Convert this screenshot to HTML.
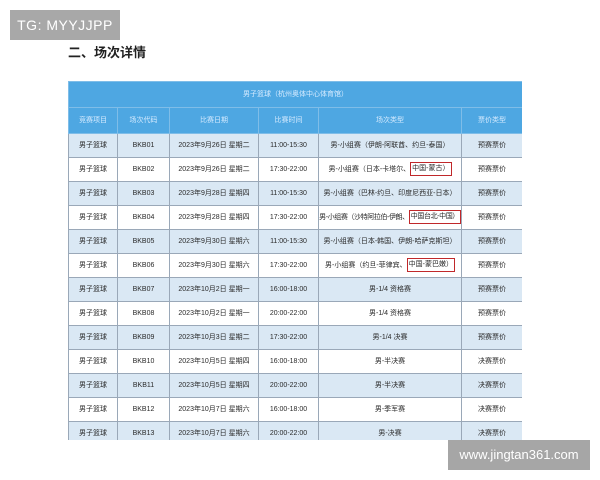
<!DOCTYPE html>
<html><head><meta charset="utf-8"><style>
body{margin:0;width:600px;height:480px;background:#fff;position:relative;overflow:hidden;font-family:"Liberation Sans","Noto Sans CJK SC",sans-serif;}
.tg{position:absolute;left:10px;top:10px;width:110px;height:30px;background:#a8a8a8;color:#fff;font-size:14px;line-height:30px;text-align:center;letter-spacing:0.5px}
.h{position:absolute;left:68px;top:42px;font-size:13px;font-weight:bold;color:#222}
.wrap{position:absolute;left:68px;top:81px;width:454px;height:359px;overflow:hidden}
table{border-collapse:collapse;width:454px;table-layout:fixed}
td{border:1px solid #9aa8b8;text-align:center;vertical-align:middle;font-size:7px;line-height:23px;color:#2a2a2a;height:23px;padding:0;white-space:nowrap;overflow:hidden}
tr.t td{background:#4ea7e2;color:#d6ebff;height:25px;line-height:25px;border-color:#7fbde8}
tr.b td{background:#dae8f4}
.r{display:inline-block;line-height:10px;border:1.5px solid #c0282a;padding:1px 1px;vertical-align:middle}
.tight{letter-spacing:-0.4px}
.wm{position:absolute;left:448px;top:440px;width:142px;height:30px;background:#a6a6a6;color:#fff;font-size:13px;line-height:30px;text-align:center}
</style></head><body>
<div class="tg">TG: MYYJJPP</div>
<div class="h">二、场次详情</div>
<div class="wrap"><table>
<colgroup><col style="width:49px"><col style="width:52px"><col style="width:89px"><col style="width:60px"><col style="width:143px"><col style="width:61px"></colgroup>
<tr class="t"><td colspan="6">男子篮球（杭州奥体中心体育馆）</td></tr>
<tr class="t"><td>竞赛项目</td><td>场次代码</td><td>比赛日期</td><td>比赛时间</td><td>场次类型</td><td>票价类型</td></tr>
<tr class="b"><td>男子篮球</td><td>BKB01</td><td>2023年9月26日 星期二</td><td>11:00-15:30</td><td>男-小组赛（伊朗-阿联酋、约旦-泰国）</td><td>预赛票价</td></tr>
<tr><td>男子篮球</td><td>BKB02</td><td>2023年9月26日 星期二</td><td>17:30-22:00</td><td>男-小组赛（日本-卡塔尔、<span class="r">中国-蒙古）</span></td><td>预赛票价</td></tr>
<tr class="b"><td>男子篮球</td><td>BKB03</td><td>2023年9月28日 星期四</td><td>11:00-15:30</td><td>男-小组赛（巴林-约旦、印度尼西亚-日本）</td><td>预赛票价</td></tr>
<tr><td>男子篮球</td><td>BKB04</td><td>2023年9月28日 星期四</td><td>17:30-22:00</td><td class="tight">男-小组赛（沙特阿拉伯-伊朗、<span class="r">中国台北-中国）</span></td><td>预赛票价</td></tr>
<tr class="b"><td>男子篮球</td><td>BKB05</td><td>2023年9月30日 星期六</td><td>11:00-15:30</td><td>男-小组赛（日本-韩国、伊朗-哈萨克斯坦）</td><td>预赛票价</td></tr>
<tr><td>男子篮球</td><td>BKB06</td><td>2023年9月30日 星期六</td><td>17:30-22:00</td><td>男-小组赛（约旦-菲律宾、<span class="r">中国-蒙巴嫩）</span></td><td>预赛票价</td></tr>
<tr class="b"><td>男子篮球</td><td>BKB07</td><td>2023年10月2日 星期一</td><td>16:00-18:00</td><td>男-1/4 资格赛</td><td>预赛票价</td></tr>
<tr><td>男子篮球</td><td>BKB08</td><td>2023年10月2日 星期一</td><td>20:00-22:00</td><td>男-1/4 资格赛</td><td>预赛票价</td></tr>
<tr class="b"><td>男子篮球</td><td>BKB09</td><td>2023年10月3日 星期二</td><td>17:30-22:00</td><td>男-1/4 决赛</td><td>预赛票价</td></tr>
<tr><td>男子篮球</td><td>BKB10</td><td>2023年10月5日 星期四</td><td>16:00-18:00</td><td>男-半决赛</td><td>决赛票价</td></tr>
<tr class="b"><td>男子篮球</td><td>BKB11</td><td>2023年10月5日 星期四</td><td>20:00-22:00</td><td>男-半决赛</td><td>决赛票价</td></tr>
<tr><td>男子篮球</td><td>BKB12</td><td>2023年10月7日 星期六</td><td>16:00-18:00</td><td>男-季军赛</td><td>决赛票价</td></tr>
<tr class="b"><td>男子篮球</td><td>BKB13</td><td>2023年10月7日 星期六</td><td>20:00-22:00</td><td>男-决赛</td><td>决赛票价</td></tr>
</table></div>
<div class="wm">www.jingtan361.com</div>
</body></html>
